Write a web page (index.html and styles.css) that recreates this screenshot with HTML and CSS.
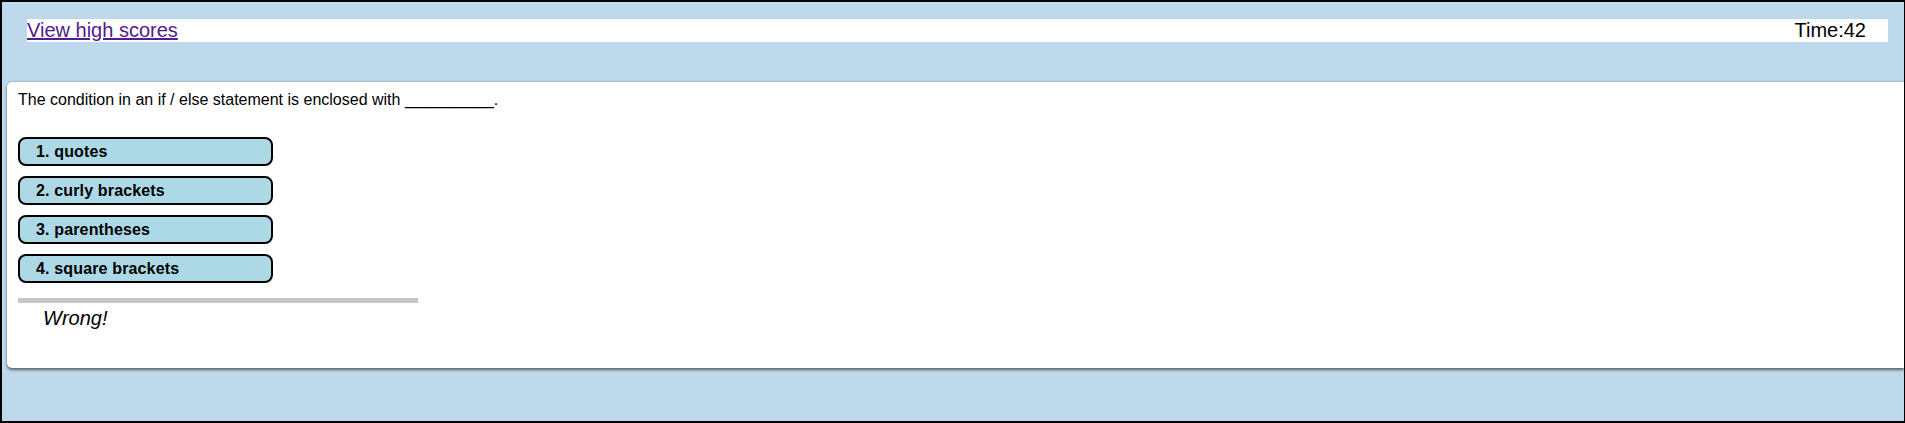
FILE: index.html
```html
<!DOCTYPE html>
<html lang="en">
<head>
<meta charset="utf-8">
<title>Code Quiz</title>
<link rel="stylesheet" href="styles.css">
</head>
<body>
<header class="top-bar">
  <a class="scores-link" href="#">View high scores</a>
  <span class="timer">Time:42</span>
</header>
<main class="card">
  <p class="question">The condition in an if / else statement is enclosed with __________.</p>
  <div class="choices">
    <button class="choice">1. quotes</button>
    <button class="choice">2. curly brackets</button>
    <button class="choice">3. parentheses</button>
    <button class="choice">4. square brackets</button>
  </div>
  <hr class="divider">
  <p class="feedback">Wrong!</p>
</main>
</body>
</html>
```

FILE: styles.css
```css
html, body {
  margin: 0;
  padding: 0;
}
html {
  height: 100%;
}
body {
  box-sizing: border-box;
  min-height: 100%;
  border-style: solid;
  border-color: #000;
  border-width: 2px 1px 2px 2px;
  background: #bed8ec;
  font-family: "Liberation Sans", Arial, sans-serif;
  color: #000;
  overflow: hidden;
}
.top-bar {
  display: flex;
  justify-content: space-between;
  align-items: center;
  margin: 17px 16px 0 25px;
  background: #fff;
  font-size: 20px;
  height: 23px;
}
.scores-link {
  color: #551a8b;
  text-decoration: underline;
}
.timer {
  padding-right: 22px;
}
.card {
  display: block;
  margin: 40px 0 0 5px;
  background: #fff;
  border-radius: 5px 0 0 5px;
  box-shadow: 0 2px 3px rgba(0, 0, 0, 0.55), 0 -1px 2px rgba(0, 0, 0, 0.12);
  padding: 9px 0 38px 11px;
}
.question {
  margin: 0;
  font-size: 16px;
  line-height: 18px;
}
.choices {
  display: flex;
  flex-direction: column;
  align-items: flex-start;
  gap: 10px;
  margin-top: 28px;
}
.choice {
  box-sizing: border-box;
  width: 255px;
  height: 29px;
  margin: 0;
  padding: 0 0 0 16px;
  border: 2px solid #000;
  border-radius: 8px;
  background: #add8e6;
  font-family: "Liberation Sans", Arial, sans-serif;
  font-weight: bold;
  font-size: 16px;
  letter-spacing: 0.15px;
  color: #000;
  text-align: left;
}
.divider {
  width: 400px;
  height: 5px;
  margin: 15px 0 0 0;
  border: 0;
  background: #c6c6c6;
}
.feedback {
  margin: 4px 0 0 25px;
  font-size: 20px;
  line-height: 23px;
  font-style: italic;
}
```
